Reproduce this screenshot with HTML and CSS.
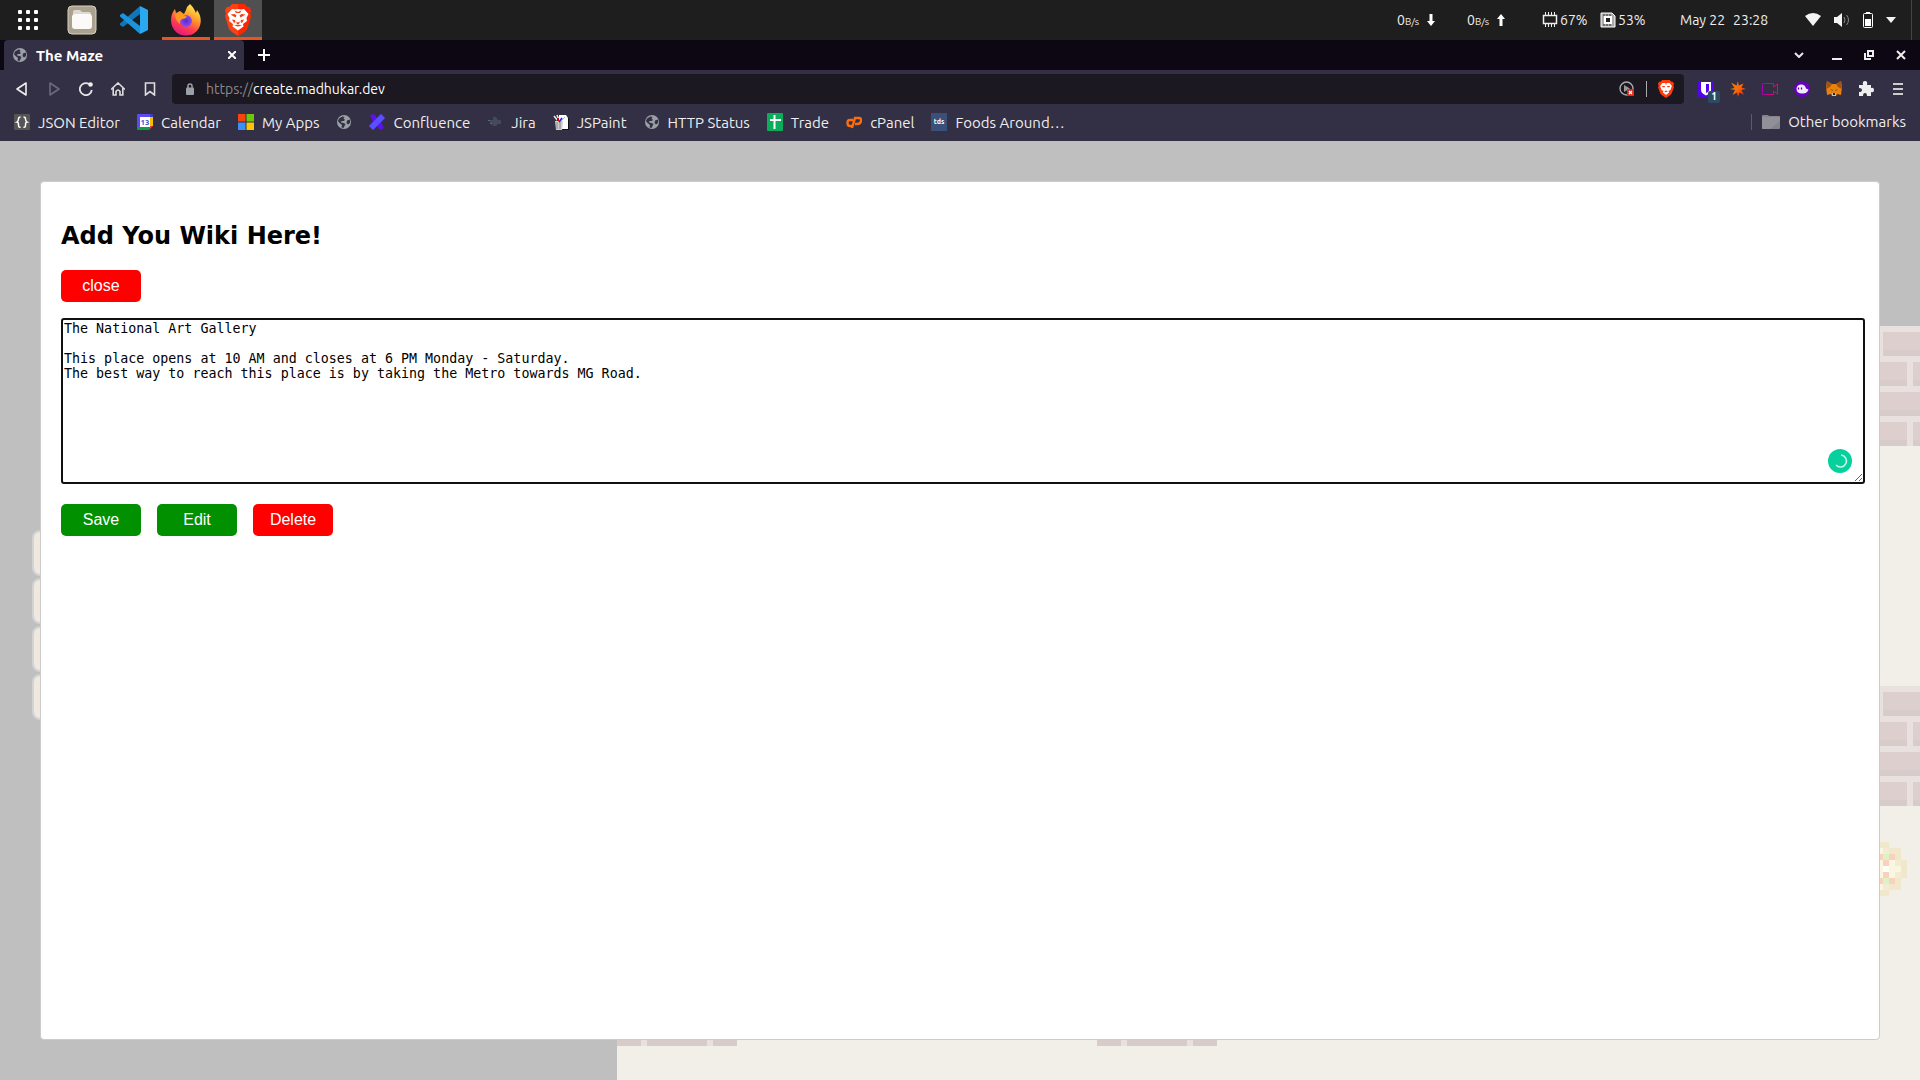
FILE: index.html
```html
<!DOCTYPE html>
<html lang="en">
<head>
<meta charset="utf-8">
<title>The Maze</title>
<link rel="stylesheet" href="styles.css">
</head>
<body>
<svg class="defs" aria-hidden="true">
  <defs>
    <symbol id="globe" viewBox="0 0 16 16"><circle cx="8" cy="8" r="7" fill="#9aa0a6"/><path d="M3 4.500 6.500 2.500 8.500 3 7.500 5 9 5.500 8 7H5.500L5 8.500 7.500 9 9.500 10 8.500 12 7.500 14 5.500 13.500 6 11 3 8.500 2 7ZM11 6.500 14 5.500V9L12 10.500 10.500 9Z" fill="#332f44"/></symbol>
    <symbol id="lion" viewBox="0 0 26 32"><path d="M7 0H19L22 3 24 3 26 6 25 10 26 12 22 25 19 28 13 32 7 28 4 25 0 12 1 10 0 6 2 3 4 3Z" fill="#fb4114"/><path d="M13 0H19L22 3 24 3 26 6 25 10 26 12 22 25 19 28 13 32Z" fill="#ff2500"/><path d="M7 5 10 5.500 13 5 16 5.500 19 5 23.500 10 21.500 14 22 17 18 20 18.500 22.500 13 26.500 7.500 22.500 8 20 4 17 4.500 14 2.500 10Z" fill="#fff"/><path d="M5.500 10.500 9.500 10 11.500 11.500 10.500 13.500ZM20.500 10.500 16.500 10 14.500 11.500 15.500 13.500ZM9.500 6.500 13 8 16.500 6.500 15 9H11ZM7 15.500 10 16 10.500 18 9 19ZM19 15.500 16 16 15.500 18 17 19ZM11 17.500 13 18.500 15 17.500 14 20H12ZM9 21.500 13 20.500 17 21.500 13 22.500Z" fill="#fb3b10"/></symbol>
  </defs>
</svg>

<header class="panel">
  <nav class="dock" aria-label="Dock">
    <button class="dock-item" aria-label="Show applications"><svg width="20" height="20" viewBox="0 0 20 20" fill="#fff"><rect width="4" height="4" rx="1"/><rect x="8" width="4" height="4" rx="1"/><rect x="16" width="4" height="4" rx="1"/><rect y="8" width="4" height="4" rx="1"/><rect x="8" y="8" width="4" height="4" rx="1"/><rect x="16" y="8" width="4" height="4" rx="1"/><rect y="16" width="4" height="4" rx="1"/><rect x="8" y="16" width="4" height="4" rx="1"/><rect x="16" y="16" width="4" height="4" rx="1"/></svg></button>
    <button class="dock-item" aria-label="Files"><svg width="30" height="30" viewBox="0 0 30 30"><rect x="1" y="1" width="28" height="28" rx="4" fill="#aaa18f" stroke="#d8d1c2"/><path d="M6 7q0-2 2-2h5l2 2h7q2 0 2 2v13H6Z" fill="#dedad3"/><rect x="5" y="9" width="20" height="15" rx="3" fill="#fbfaf8"/></svg></button>
    <button class="dock-item" aria-label="Code editor"><svg width="28" height="28" viewBox="0 0 28 28"><path d="M20 0 28 4V24L20 28Z" fill="#2aa9f0"/><path d="M20 0V8L3 21 0 19V17.500Z" fill="#0e76b9"/><path d="M20 28V20L3 7 0 9V10.500Z" fill="#1b94dd"/></svg></button>
    <button class="dock-item running" aria-label="Firefox"><svg width="32" height="32" viewBox="0 0 32 32"><defs><linearGradient id="fx" x1=".8" y1="0" x2=".3" y2="1"><stop offset="0" stop-color="#fff44f"/><stop offset=".4" stop-color="#ff9a2c"/><stop offset=".7" stop-color="#ff3d4f"/><stop offset="1" stop-color="#e31587"/></linearGradient><radialGradient id="fp"><stop offset="0" stop-color="#592acb"/><stop offset="1" stop-color="#8f4df0"/></radialGradient></defs><path d="M20 0C24 4 25 7 26 9L27 6C31 11 32 18 29 24A15 15 0 0 1 2 22C0 16 1 10 5 5L6 9 10 7 14 10 16 6Q17 2 20 0Z" fill="url(#fx)"/><circle cx="16" cy="17" r="6" fill="url(#fp)"/><path d="M5 10Q10 9 14 11L17 13Q15 15 12 15 9 17 10 20 5 16 5 10Z" fill="#ff9a1f"/></svg></button>
    <button class="dock-item running active" aria-label="Brave"><svg width="26" height="32"><use href="#lion"/></svg></button>
  </nav>
  <div class="status">
    <span class="net"><span>0<small>B/s</small></span><svg width="8" height="12" viewBox="0 0 8 12"><path d="M2.500 0h3v7H8L4 12 0 7h2.500Z" fill="#fff"/></svg></span>
    <span class="net"><span>0<small>B/s</small></span><svg width="8" height="12" viewBox="0 0 8 12"><path d="M2.500 12h3V5H8L4 0 0 5h2.500Z" fill="#fff"/></svg></span>
    <span class="meter"><svg width="16" height="16" viewBox="0 0 16 16" fill="none" stroke="#eee"><path d="M1.500 3.500h13v8h-13Z" stroke-width="1.500"/><path d="M3.500 0v3M6.500 0v3M9.500 0v3M12.500 0v3M3.500 12v3M6.500 12v3M9.500 12v3M12.500 12v3"/></svg>67%</span>
    <span class="meter"><svg width="16" height="16" viewBox="0 0 16 16"><path d="M1 1h11l3 3v11H1Z" fill="#aaa" stroke="#fff"/><path d="M5 5h6v6H5Z" fill="#222" stroke="#fff" stroke-width="2"/><path d="M4 2v2M7 2v2M10 2v2M4 12v2M7 12v2M10 12v2" stroke="#333"/></svg>53%</span>
    <time class="clock"><span>May 22</span><span>23:28</span></time>
    <button class="tray" aria-label="System menu">
      <svg width="16" height="14" viewBox="0 0 16 14"><path d="M0 3Q8-3 16 3L8 13Z" fill="#f4f4f4"/></svg>
      <svg width="16" height="14" viewBox="0 0 16 14"><path d="M0 4h3l5-4v14L3 10H0Z" fill="#f4f4f4"/><path d="M10 4q2 3 0 6M12.500 2q4 5 0 10" fill="none" stroke="#888"/></svg>
      <svg width="10" height="16" viewBox="0 0 10 16"><path d="M3 0h4v2H3Z" fill="#fff"/><rect x=".5" y="1.500" width="9" height="14" rx="1" fill="none" stroke="#fff"/><path d="M2 7h6v7H2Z" fill="#fff"/></svg>
      <svg width="10" height="6" viewBox="0 0 10 6"><path d="M0 0h10L5 6Z" fill="#f4f4f4"/></svg>
    </button>
  </div>
</header>

<div class="tabstrip">
  <div class="tab"><svg width="16" height="16"><use href="#globe"/></svg><span class="tab-title">The Maze</span><button class="icon" aria-label="Close tab"><svg width="8" height="8" viewBox="0 0 8 8"><path d="M0 0 8 8M8 0 0 8" stroke="#fff" stroke-width="2"/></svg></button></div>
  <button class="icon new-tab" aria-label="New tab"><svg width="12" height="12" viewBox="0 0 12 12"><path d="M6 0v12M0 6h12" stroke="#fff" stroke-width="2"/></svg></button>
  <div class="window-buttons">
    <button class="icon" aria-label="Search tabs"><svg width="10" height="6" viewBox="0 0 10 6"><path d="m1 1 4 4 4-4" fill="none" stroke="#e8e8e8" stroke-width="2"/></svg></button>
    <button class="icon" aria-label="Minimize"><svg width="10" height="10" viewBox="0 0 10 10"><path d="M0 9h10" stroke="#eee" stroke-width="2"/></svg></button>
    <button class="icon" aria-label="Restore"><svg width="10" height="10" viewBox="0 0 10 10" fill="none" stroke="#eee" stroke-width="2"><path d="M4 1h5v5H4ZM1 3v6h6"/></svg></button>
    <button class="icon" aria-label="Close window"><svg width="10" height="10" viewBox="0 0 10 10"><path d="m1 1 8 8M9 1 1 9" stroke="#eee" stroke-width="2"/></svg></button>
  </div>
</div>

<div class="toolbar">
  <div class="nav-buttons">
    <button class="icon" aria-label="Back"><svg width="14" height="14" viewBox="0 0 14 14"><path d="M11 1v12L2 7Z" fill="none" stroke="#eee" stroke-width="1.600" stroke-linejoin="round"/></svg></button>
    <button class="icon" aria-label="Forward"><svg width="14" height="14" viewBox="0 0 14 14"><path d="M3 1v12l9-6Z" fill="none" stroke="#6d697b" stroke-width="1.600" stroke-linejoin="round"/></svg></button>
    <button class="icon" aria-label="Reload"><svg width="14" height="14" viewBox="0 0 14 14"><path d="M12.800 8A6 6 0 1 1 10 2" fill="none" stroke="#e4e4e8" stroke-width="1.800"/><circle cx="11.500" cy="2.500" r="2.300" fill="#eee"/></svg></button>
    <button class="icon" aria-label="Home"><svg width="14" height="14" viewBox="0 0 14 14"><path d="M0 7.500 7 1l7 6.500M2.200 6v7H5V9.500q2-3 4 0V13h2.800V6" fill="none" stroke="#ddd" stroke-width="1.600"/></svg></button>
    <button class="icon" aria-label="Bookmark this page"><svg width="14" height="14" viewBox="0 0 14 14"><path d="M2.500 1h9v12L7 9.500 2.500 13Z" fill="none" stroke="#ddd" stroke-width="1.600"/></svg></button>
  </div>
  <div class="address">
    <svg width="8" height="12" viewBox="0 0 8 12"><path d="M2 6V3q0-2 2-2t2 2v3" fill="none" stroke="#9aa0a6" stroke-width="1.500"/><rect y="4.500" width="8" height="7.500" rx="1" fill="#9aa0a6"/></svg>
    <label for="url">https://</label><input id="url" type="text" value="create.madhukar.dev">
    <button class="icon" aria-label="Media blocked"><svg width="16" height="16" viewBox="0 0 16 16"><circle cx="7.500" cy="7.500" r="6.500" fill="none" stroke="#aaa" stroke-width="1.400"/><path d="M5 4 11 7.500 5 11Z" fill="#999"/><rect x="8" y="8" width="7" height="7" fill="#e02a1c"/><path d="m10 10 3 3m0-3-3 3" stroke="#fff" stroke-width="1.300"/></svg></button>
    <span class="divider"></span>
    <button class="icon" aria-label="Shields"><svg width="16" height="18" viewBox="0 0 26 30" preserveAspectRatio="none"><path d="M7 0H19L22 3 24 3 26 6 25 10 26 12 22 23 19 26 13 30 7 26 4 23 0 12 1 10 0 6 2 3 4 3Z" fill="#ff3a0a"/><path d="M7 5H19L22.500 10 20 17 17 18 18 21 13 25 8 21 9 18 6 17 3.500 10Z" fill="#fff"/><path d="M6 10h5v2H8ZM20 10h-5v2h3ZM10 19l3-1.500L16 19l-3 1.500ZM11 6h4l-2 2Z" fill="#ff3a0a"/></svg></button>
  </div>
  <div class="extensions">
    <button class="icon badged" aria-label="Passwords"><svg width="16" height="16" viewBox="0 0 16 16"><rect width="16" height="16" rx="1" fill="#5204ea"/><path d="M3 1h10v8q0 3-5 5.500Q3 12 3 9Z" fill="#fff"/><path d="M8 3h3v6q0 2-3 3Z" fill="#5204ea"/></svg><span class="badge">1</span></button>
    <button class="icon" aria-label="Spark"><svg width="16" height="16" viewBox="0 0 16 16"><defs><linearGradient id="sp" x2="1" y2="1"><stop offset="0" stop-color="#d88220"/><stop offset=".5" stop-color="#ff6a00"/><stop offset="1" stop-color="#d0102a"/></linearGradient></defs><path d="m8 0 .7 4.500L13.500 2.500 11.500 6.500 16 8 11.500 9 14 14 9.500 11.500 8 16 7 11.500 2.500 14 5 9 0 8 4.500 7 1 1.500 6.500 4.500Z" fill="url(#sp)"/></svg></button>
    <button class="icon" aria-label="Recorder"><svg width="16" height="12" viewBox="0 0 16 12"><defs><linearGradient id="cm"><stop offset="0" stop-color="#a405b5"/><stop offset="1" stop-color="#e20c55"/></linearGradient></defs><path d="M.5.500H11.500V4L15.500 1v10L11.500 8v3.500H.5Z" fill="none" stroke="url(#cm)"/></svg></button>
    <button class="icon" aria-label="Wallet"><svg width="16" height="16" viewBox="0 0 16 16"><circle cx="8" cy="8" r="8" fill="#6500bd"/><path d="M2.500 7.500Q3 4 6.500 3.500 11 3 12 7.500L14.500 8.500 13.500 10.500Q12 13 8 12.500 2.500 12.500 2.500 7.500Z" fill="#f4eaff"/><path d="M4.500 6.500v2M7.500 6.500v2" stroke="#5b00a8" stroke-width="1.300"/></svg></button>
    <button class="icon" aria-label="Fox"><svg width="16" height="16" viewBox="0 0 16 16"><path d="m1 0 5 3h4l5-3 1 6-1 8-4-1-1 2H6l-1-2-4 1L0 6Z" fill="#e8820c"/><path d="m1 0 5 3-2 3-4 2ZM15 0l-5 3 2 3 4 2Z" fill="#a35213"/><path d="m4 8 2.500 1v1ZM12 8 9.500 9v1Z" fill="#333"/><path d="M6 12h4v3H6Z" fill="#c8bdb0"/><path d="M7 12h2v2H7Z" fill="#222"/></svg></button>
    <button class="icon" aria-label="Extensions"><svg width="16" height="16" viewBox="0 0 16 16"><path d="M1 4h4q-1-4 2-4t2 4h4v3q3-1 3 2t-3 2v4H9q0-3-2-3t-2 3H1v-4q3 0 3-2T1 7Z" fill="#eee"/></svg></button>
    <button class="icon" aria-label="Menu"><svg width="10" height="12" viewBox="0 0 10 12"><path d="M0 1h10M0 6h10M0 11h10" stroke="#ccc" stroke-width="2"/></svg></button>
  </div>
</div>

<nav class="bookmarks" aria-label="Bookmarks">
  <a href="#"><svg width="16" height="16" viewBox="0 0 16 16"><rect width="16" height="16" rx="1" fill="#555"/><path d="M6.500 3Q4.500 3 4.500 5T3 8q1.500 0 1.500 3t2 2M9.500 3q2 0 2 2T13 8q-1.500 0-1.500 3t-2 2" fill="none" stroke="#fff" stroke-width="1.500"/></svg>JSON Editor</a>
  <a href="#"><svg width="16" height="16" viewBox="0 0 16 16"><path d="M0 1q0-1 1-1h12v3H3v10H0Z" fill="#5b4bf5"/><path d="M13 3h3v9h-3Z" fill="#fbbc04"/><path d="M0 13h12v3H1q-1 0-1-1Z" fill="#0d9d43"/><path d="M12 12h4l-4 4Z" fill="#ea3a2d"/><path d="M13 0h2q1 0 1 1v2h-3Z" fill="#3640c8"/><path d="M3 3h10v10H3Z" fill="#fff"/><text x="8" y="11" class="cal-day">13</text></svg>Calendar</a>
  <a href="#"><svg width="16" height="16" viewBox="0 0 16 16"><path d="M0 0h7.500v7.500H0Z" fill="#f8430d"/><path d="M8.500 0H16v7.500H8.500Z" fill="#6cc80a"/><path d="M0 8.500h7.500V16H0Z" fill="#3b8ff5"/><path d="M8.500 8.500H16V16H8.500Z" fill="#ffc400"/></svg>My Apps</a>
  <a href="#" aria-label="Untitled bookmark"><svg width="16" height="16"><use href="#globe"/></svg></a>
  <a href="#"><svg width="16" height="16" viewBox="0 0 16 16"><path d="M1 1 5 0 8 4 12 0 16 4 12 8 15 14 11 16 8 12 4 16 0 12 4 8Z" fill="#5b12ee"/><path d="M12 0l4 4L4 16l-4-4Z" fill="#5a50ff"/></svg>Confluence</a>
  <a href="#"><svg width="16" height="16" viewBox="0 0 16 16"><path d="M3 6h3V3h3l2 3h3v4h-3l-2 2H6l-1-2H3Z" fill="#444a57"/><path d="M1 6h2v1H1ZM3 9h2v1H3Z" fill="#39768f"/></svg>Jira</a>
  <a href="#"><svg width="16" height="16" viewBox="0 0 16 16"><path d="M6 1h7l2 3v12H6Z" fill="#fff"/><path d="M15.500 4v11.500H5" fill="none" stroke="#111"/><path d="M2 7h8l-1 9H3Z" fill="#ccc"/><path d="M4 8v7M7 8v7" stroke="#888"/><path d="m1 2 4 5M4 1l2 5" stroke="#eee" stroke-width="1.500"/><path d="m5 4v3" stroke="#c00" stroke-width="2"/><path d="m12 3-5 5" stroke="#cc0"/><path d="m9 4-3 4" stroke="#22d" stroke-width="1.500"/></svg>JSPaint</a>
  <a href="#"><svg width="16" height="16"><use href="#globe"/></svg>HTTP Status</a>
  <a href="#"><svg width="16" height="18" viewBox="0 0 16 18"><rect width="16" height="18" rx="1" fill="#0bac5c"/><path d="M7.500 2v14M3 7h11" stroke="#fff" stroke-width="2"/></svg>Trade</a>
  <a href="#"><svg width="16" height="16" viewBox="0 0 16 16" fill="none" stroke="#ff6c0c" stroke-width="2.400"><path d="M7 6H4Q1.500 6 1.500 9t2.500 3h1.500M6 14 9 4h4q2.500 0 2 3t-4 3H9"/></svg>cPanel</a>
  <a href="#"><svg width="16" height="18" viewBox="0 0 16 18"><path d="M0 0h16v18H0Z" fill="#3a5078"/><text x="8" y="11" class="tds">tds</text></svg>Foods Around…</a>
  <a class="other" href="#"><svg width="18" height="14" viewBox="0 0 18 14"><path d="M0 1q0-1 1-1h5l1 1h10q1 0 1 1v11q0 1-1 1H1q-1 0-1-1Z" fill="#85838c"/><path d="M0 2h18v4L8 14H1q-1 0-1-1Z" fill="#918f98"/></svg>Other bookmarks</a>
</nav>

<main class="page">
  <svg class="map" width="1440" height="760" aria-hidden="true">
    <defs>
      <pattern id="wall" width="120" height="120" patternUnits="userSpaceOnUse">
        <rect width="120" height="120" fill="#e9e1e0"/>
        <path d="M0 6H60V30H0ZM66 6H120V30H66ZM0 36H24V60H0ZM30 36H90V60H30ZM96 36H120V60H96ZM0 66H60V90H0ZM66 66H120V90H66ZM60 66H66V90H60ZM0 96H24V120H0ZM30 96H90V120H30ZM96 96H120V120H96Z" fill="#dccfce"/>
        <path d="M0 24H60V30H0ZM66 24H120V30H66ZM0 54H24V60H0ZM30 54H90V60H30ZM96 54H120V60H96ZM0 84H120V90H0ZM0 114H24V120H0ZM30 114H90V120H30ZM96 114H120V120H96Z" fill="#d8cccb"/>
      </pattern>
      <pattern id="floor" width="120" height="120" patternUnits="userSpaceOnUse">
        <rect width="120" height="120" fill="#f2efe8"/>
        <g fill="#eff0e8"><circle cx="93" cy="15" r="3"/><circle cx="87" cy="45" r="3"/><circle cx="15" cy="21" r="3"/><circle cx="45" cy="27" r="3"/><circle cx="87" cy="81" r="3"/></g>
      </pattern>
    </defs>
    <rect width="1440" height="760" fill="url(#floor)"/>
    <path d="M1200 0h120v120h-120ZM1200 360h120v120h-120ZM0 600h120v120H0ZM480 600h120v120H480Z" fill="url(#wall)"/>
    <g transform="translate(1260 516)">
      <path d="M0 0h12v6h12v12h6v18h-6v12H12v6H0Z" fill="#f1e8cc"/>
      <path d="M0 6h12v6h6v6h6v18h-6v6h-6v6H0Z" fill="#f3ecd5"/>
      <path d="M12 6h12v12h-6v-6h-6ZM12 48h12V36h-6v6h-6Z" fill="#f1e8cc"/>
      <path d="M0 6h6v12H0ZM0 18h18v18H0ZM18 24h6v6h-6ZM0 36h6v12H0Z" fill="#faf6df"/>
      <path d="M0 12h6v6H0ZM12 12h6v6h-6ZM6 18h6v6H6ZM6 30h6v6H6ZM0 36h6v6H0ZM12 36h6v6h-6Z" fill="#f8d2be"/>
      <path d="M6 12h6v6H6ZM6 36h6v6H6Z" fill="#dcf3c4"/>
      <path d="M6 24h6v6H6Z" fill="#fff"/>
    </g>
  </svg>
  <div class="side-tools" aria-hidden="true"><button tabindex="-1"></button><button tabindex="-1"></button><button tabindex="-1"></button><button tabindex="-1"></button></div>

  <section class="modal" role="dialog" aria-labelledby="wiki-title">
    <h2 id="wiki-title">Add You Wiki Here!</h2>
    <button class="btn danger">close</button>
    <div class="editor">
      <textarea aria-labelledby="wiki-title" spellcheck="false">The National Art Gallery

This place opens at 10 AM and closes at 6 PM Monday - Saturday.
The best way to reach this place is by taking the Metro towards MG Road.</textarea>
      <svg class="checker" width="24" height="24" viewBox="0 0 24 24" aria-hidden="true"><circle cx="12" cy="12" r="12" fill="#06d19c"/><path d="M13 6a6 6 0 1 1-5 10" fill="none" stroke="#c8f5e8" stroke-width="1.600"/></svg>
    </div>
    <div class="actions">
      <button class="btn">Save</button>
      <button class="btn">Edit</button>
      <button class="btn danger">Delete</button>
    </div>
  </section>
</main>
</body>
</html>
```
FILE: styles.css
```css
* { box-sizing: border-box; }

body {
  margin: 0;
  min-height: 100vh;
  display: flex;
  flex-direction: column;
  font-family: Ubuntu, "Noto Sans", sans-serif;
  font-size: 14px;
  color: #eee;
}

button {
  border: 0;
  padding: 0;
  background: none;
  color: inherit;
  font: inherit;
}

svg { flex: none; display: block; }

.defs { position: absolute; width: 0; height: 0; }

/* Desktop panel */
.panel {
  display: flex;
  justify-content: space-between;
  height: 40px;
  background: #1e1e1e;
}

.dock { display: flex; gap: 4px; padding-left: 4px; }

.dock-item {
  width: 48px;
  display: grid;
  place-items: center;
  border-bottom: 3px solid transparent;
  border-top: 3px solid transparent;
}

.dock-item:first-child { margin-right: 2px; }
.dock-item.running { border-bottom-color: #e95420; }
.dock-item.active { background: #505050; border-top-color: #505050; }

.status {
  display: flex;
  align-items: center;
  border-right: 1px solid #444;
  margin-right: 8px;
  padding-right: 15px;
}

.net { display: flex; align-items: center; gap: 8px; width: 70px; }
.net small { font-size: 10px; }
.meter { display: flex; align-items: center; gap: 2px; width: 58px; }
.net + .meter { margin-left: 5px; }
.clock { display: flex; gap: 8px; width: 109px; margin-left: 22px; }
.tray { display: flex; align-items: center; gap: 13px; margin-left: 16px; }

/* Browser chrome */
.icon { display: grid; place-items: center; width: 32px; height: 28px; flex: none; }

.tabstrip {
  display: flex;
  align-items: center;
  height: 30px;
  padding-left: 4px;
  background: #0d0714;
}

.tab {
  display: flex;
  align-items: center;
  gap: 8px;
  width: 240px;
  height: 30px;
  padding-left: 8px;
  border-radius: 4px 4px 0 0;
  background: #332f44;
  color: #fff;
}

.tab-title { flex: 1; font-size: 15px; font-weight: 600; }
.tab .icon { width: 24px; }
.new-tab { width: 40px; }
.window-buttons { display: flex; margin-left: auto; padding-right: 3px; }
.window-buttons .icon:first-child { margin-right: 6px; }

.toolbar {
  display: flex;
  align-items: center;
  height: 38px;
  padding: 0 6px;
  background: #332f44;
}

.nav-buttons { display: flex; width: 166px; }

.address {
  flex: 1;
  display: flex;
  align-items: center;
  height: 30px;
  padding: 0 2px 0 14px;
  border-radius: 4px;
  background: #1b1822;
}

.address label { margin-left: 12px; color: #8b8987; }

.address input {
  flex: 1;
  min-width: 0;
  border: 0;
  padding: 0;
  outline: 0;
  background: none;
  color: #fff;
  font: inherit;
}

.divider { width: 1px; height: 16px; margin: 0 3px; background: #aaa; }

.extensions { display: flex; padding-left: 6px; }
.badged { position: relative; }

.badge {
  position: absolute;
  left: 18px;
  top: 16px;
  width: 12px;
  height: 12px;
  border-radius: 2px;
  background: #2c4a63;
  color: #fff;
  font-size: 10px;
  font-weight: 700;
  line-height: 12px;
}

.bookmarks {
  display: flex;
  align-items: center;
  gap: 17px;
  height: 33px;
  padding: 0 14px 5px;
  background: #332f44;
  font-size: 15px;
}

.bookmarks a {
  display: flex;
  align-items: center;
  gap: 8px;
  color: #eee;
  text-decoration: none;
  white-space: nowrap;
}

.bookmarks .other { margin-left: auto; padding-left: 10px; border-left: 1px solid #5d5a6a; line-height: 16px; }

.cal-day, .tds { font-weight: 700; text-anchor: middle; }
.cal-day { font-size: 8px; fill: #3a4fd0; }
.tds { font-size: 7px; fill: #fff; }

/* Maze page, dimmed behind the dialog */
.page {
  position: relative;
  flex: 1;
  display: flex;
  padding: 40px;
  overflow: hidden;
  background: #bfbfbf;
}

.map { position: absolute; left: 617px; top: 185px; }

.side-tools {
  position: absolute;
  left: 32px;
  top: 389px;
  display: flex;
  flex-direction: column;
  gap: 2px;
}

.side-tools button {
  width: 80px;
  height: 46px;
  border: 2px solid #d3d3d6;
  border-radius: 8px;
  background: #efe8df;
}

.modal {
  position: relative;
  flex: 1;
  padding: 20px;
  border: 1px solid #ccc;
  border-radius: 4px;
  background: #fff;
  color: #000;
}

.modal h2 {
  margin: 20px 0;
  font: 700 24px/28px "DejaVu Sans", sans-serif;
}

.btn {
  display: block;
  width: 80px;
  height: 32px;
  border-radius: 5px;
  background: #009000;
  color: #fff;
  font: 16px "Liberation Sans", Arial, sans-serif;
}

.btn.danger { background: #f00; }

.editor { position: relative; margin: 16px 0 20px; }

/* The field spans the full row and its frame extends past it */
.editor textarea {
  display: block;
  box-sizing: content-box;
  width: 100%;
  height: 160px;
  padding: 1px;
  border: 2px solid #101010;
  border-radius: 3px;
  outline: 0;
  background: #fff;
  color: #000;
  font-family: "DejaVu Sans Mono", monospace;
  line-height: 15px;
  resize: vertical;
}

.checker { position: absolute; right: 7px; top: 131px; }

.actions { display: flex; gap: 16px; }
```
